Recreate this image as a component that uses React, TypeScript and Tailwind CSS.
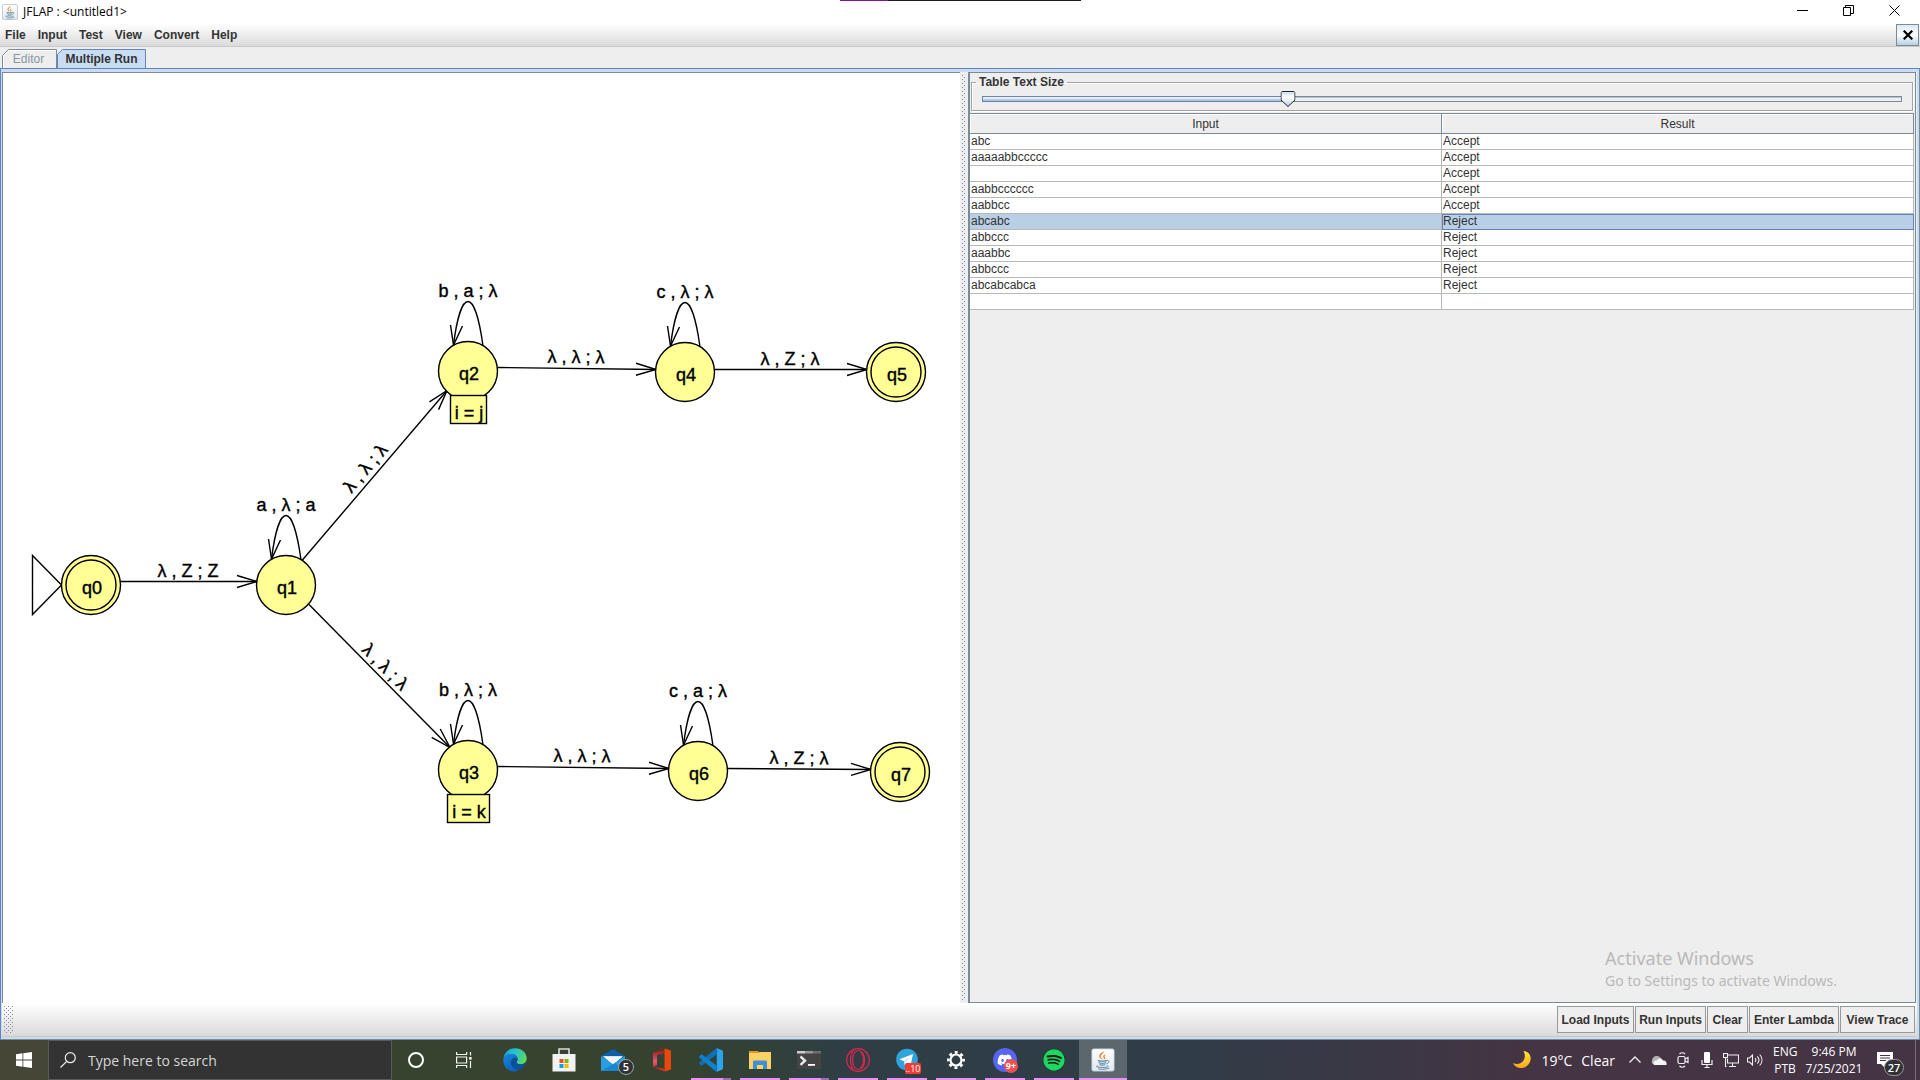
import React, { useState } from "react";
import { FaDiscord, FaSpotify } from "react-icons/fa";

const UI = "font-['Liberation_Sans',Arial,sans-serif]";
const SYS = "font-['Open_Sans','Noto_Sans',sans-serif]";

/* ---------- icons ---------- */

function JavaCup({ className }: { className: string }) {
  return (
    <svg viewBox="0 0 24 24" className={className} aria-hidden="true">
      <defs>
        <linearGradient id="cupbg" x1="0" y1="0" x2="0" y2="1">
          <stop offset="0" stopColor="#ffffff" />
          <stop offset="1" stopColor="#e3e8ee" />
        </linearGradient>
      </defs>
      <rect x="0.7" y="0.7" width="22.6" height="22.6" rx="2" fill="url(#cupbg)" stroke="#93a4b5" strokeWidth="0.8" />
      <path d="M12.500 2.800c1.300 2.200-3.600 3.600-2.900 6 .2.9 1.200 1.600 1.800 2.500-1.500-.7-3.600-1.800-3.100-3.900.5-2 4-2.700 4.200-4.600z" fill="#e76f00" />
      <path d="M14.800 6.200c-1.800.8-2.900 1.700-2.400 2.900.4.8 1.100 1.400.2 2.700 1.500-.8 1.700-1.700 1.100-2.700-.6-1 .1-1.900 1.100-2.900z" fill="#e76f00" />
      <g fill="none" stroke="#5382a1" strokeLinecap="round">
        <path d="M7.300 12.600c2.300.6 5.800.6 8 0" strokeWidth="1.200" />
        <path d="M8 14.700c1.900.6 4.900.6 6.700 0" strokeWidth="1.200" />
        <path d="M8.800 16.800c1.500.5 3.500.5 5 0" strokeWidth="1.200" />
        <path d="M16 12.600c2.300-.8 3.200 1.700-.2 3.200" strokeWidth="1" />
        <path d="M6.300 17.700c-2.500 1 0 1.700 5.400 1.700 4.500 0 6.800-.8 5-1.600" strokeWidth="1" />
        <path d="M7.500 21c3.500.5 8 .3 10.500-.8" strokeWidth="0.900" />
      </g>
    </svg>
  );
}

function EdgeIcon() {
  return (
    <svg viewBox="0 0 24 24" className="h-6 w-6" aria-hidden="true">
      <defs>
        <linearGradient id="edgeTop" x1="0" y1="0.300" x2="1" y2="0.600">
          <stop offset="0" stopColor="#1fa4e0" />
          <stop offset="0.500" stopColor="#2bc3c8" />
          <stop offset="1" stopColor="#5edb5a" />
        </linearGradient>
        <linearGradient id="edgeLow" x1="0" y1="0" x2="0.600" y2="1">
          <stop offset="0" stopColor="#1488dc" />
          <stop offset="1" stopColor="#0f60b8" />
        </linearGradient>
      </defs>
      <path d="M.4 10.500C1.300 4.500 6 .2 12 .2c6.800 0 11.700 4.700 11.700 10.200 0 3.400-2.600 5.800-6 5.800-2.700 0-4.200-1-4.200-2 0-.7 1.100-1.100 1.100-3.200 0-2.600-2.800-5-6.600-5C4.800 6 1.900 7.600.4 10.500z" fill="url(#edgeTop)" />
      <path d="M.3 11.800C.6 8 4 5.900 8 6c3.800 0 6.400 2 6.500 4.400-4-1.600-6.800 1.200-6.300 4.900.5 3.400 3.400 6.400 8 6.200-1.400 1.300-3 2-5 2.100C5.300 23.500.1 18.500.3 11.800z" fill="url(#edgeLow)" />
      <path d="M8.100 14.500c0-2.700 1.600-4.600 4.200-4.700 1.300 0 2.200.3 2.200 1.400 0 1.600-1 2.300-1 3 0 1.200 2 2.400 4.700 2.200 1.800-.1 3-.6 4-1.100.5-.2.700.2.500.6-1.500 3-4.300 5.600-7.600 5.700-3.700 0-7-3.300-7-7.100z" fill="#0c4f9f" />
    </svg>
  );
}

function StoreIcon() {
  return (
    <svg viewBox="0 0 24 24" className="h-6 w-6" aria-hidden="true">
      <path d="M7 7V1h10v6" fill="none" stroke="#dcdcdc" strokeWidth="1.600" />
      <path d="M.5 6h23v17.500H.5z" fill="#f2f2f2" />
      <path d="M7.500 11h4v4h-4z" fill="#f25022" />
      <path d="M12.500 11h4v4h-4z" fill="#7fba00" />
      <path d="M7.500 16h4v4h-4z" fill="#00a4ef" />
      <path d="M12.500 16h4v4h-4z" fill="#ffb900" />
    </svg>
  );
}

function MailIcon() {
  return (
    <span className="relative block h-6 w-6">
      <svg viewBox="0 0 24 24" className="h-6 w-6" aria-hidden="true">
        <path d="M0 8L12 1l12 7v4H0z" fill="#0f5ea8" />
        <path d="M2.500 8.500h19L12 17z" fill="#f5f5f5" />
        <path d="M0 8l12 8L24 8v15H0z" fill="#2a9fe0" />
        <path d="M2 8.200h20L12 16z" fill="#f5f5f5" />
        <path d="M0 23L14 15l10 8z" fill="#1b86d0" />
      </svg>
      <span className={`absolute -right-[9px] -bottom-[3px] flex h-4 w-4 items-center justify-center rounded-full border border-[#a5a5a5] bg-[#2f3338] text-[11px] font-semibold text-white ${SYS}`}>5</span>
    </span>
  );
}

function OfficeIcon() {
  return (
    <svg viewBox="0 0 24 24" className="h-6 w-6" aria-hidden="true">
      <defs>
        <linearGradient id="off" x1="0" y1="0" x2="0" y2="1">
          <stop offset="0" stopColor="#8f1210" />
          <stop offset="0.700" stopColor="#e05a78" />
          <stop offset="1" stopColor="#d8342c" />
        </linearGradient>
      </defs>
      <path d="M14.500.5L3 4.500V19l4-1.800V7l7.500-2z" fill="url(#off)" />
      <path d="M14.500.5L21 2.500v19l-6.500 2z" fill="#e8480c" />
      <path d="M3 19l11.500 1.500v3z" fill="#d42a20" />
    </svg>
  );
}

function VsCodeIcon() {
  return (
    <svg viewBox="0 0 24 24" className="h-6 w-6" aria-hidden="true">
      <path d="M17.500 0v6.500L3.300 17.200c-.4.300-.9.300-1.300 0L.4 15.700c-.5-.4-.5-1.100 0-1.500z" fill="#0e70b8" />
      <path d="M17.500 24v-6.500L3.300 6.800c-.4-.3-.9-.3-1.300 0L.4 8.300c-.5.400-.5 1.100 0 1.500z" fill="#1081cf" />
      <path d="M17.500 0L23 2.300c.6.300 1 .8 1 1.500v16.400c0 .7-.4 1.200-1 1.500L17.500 24c.3-.4.300-.8.300-1.200V1.200c0-.4 0-.8-.3-1.200z" fill="#2ba3f0" />
    </svg>
  );
}

function FolderIcon() {
  return (
    <svg viewBox="0 0 24 24" className="h-6 w-6" aria-hidden="true">
      <path d="M1 3h9l2 2.500H1z" fill="#e09a16" />
      <path d="M1 5h9l2-1h11v17H1z" fill="#fdd164" />
      <path d="M5 21v-7c0-.8.700-1.500 1.500-1.500h11c.8 0 1.500.7 1.500 1.500v7h-4v-4H9v4z" fill="#3c8fd8" />
    </svg>
  );
}

function TerminalIcon() {
  return (
    <svg viewBox="0 0 24 24" className="h-6 w-6" aria-hidden="true">
      <path d="M0 3h24v18H0z" fill="#444444" />
      <path d="M0 3h8v2.500H0z" fill="#cccccc" />
      <path d="M8 3h8v2.500H8z" fill="#979797" />
      <path d="M16 3h8v2.500h-8z" fill="#6d6d6d" />
      <path d="M3.500 8.500L8 12.700l-4.500 4.200" fill="none" stroke="#e8e8e8" strokeWidth="2.400" />
      <path d="M11 16h7v1.800h-7z" fill="#ffffff" />
    </svg>
  );
}

function OperaIcon() {
  return (
    <svg viewBox="0 0 24 24" className="h-6 w-6" fill="none" stroke="#e0264d" strokeWidth="1.200" aria-hidden="true">
      <circle cx="12" cy="12" r="11.300" />
      <ellipse cx="12" cy="12" rx="5.500" ry="9.500" />
      <path d="M7.500 2.200C3.500 7 3.500 17 7.500 21.800M14 3.500c6 1 6 16 0 17" />
    </svg>
  );
}

function TelegramIcon() {
  return (
    <span className="relative block h-6 w-6">
      <svg viewBox="0 0 24 24" className="h-6 w-6" aria-hidden="true">
        <circle cx="12" cy="11.500" r="10.800" fill="#2ea3dc" />
        <path d="M4.500 11.300L18 6l-2.500 12-4-3-2 2-.5-3.800z" fill="#ffffff" />
        <path d="M9 13.200L15.500 8.500 10.200 14l-.7 3z" fill="#b9d8ea" />
      </svg>
      <span className={`absolute -right-[2px] -bottom-[2px] flex h-[11px] w-4 items-center justify-center rounded-xs bg-[#f23c34] text-[9px] leading-[11px] text-white ${SYS}`}>..10</span>
    </span>
  );
}

function GearIcon() {
  return (
    <svg viewBox="0 0 24 24" className="h-6 w-6" fill="none" stroke="#ffffff" aria-hidden="true">
      <circle cx="12" cy="12" r="5.500" strokeWidth="2.200" />
      <circle cx="12" cy="12" r="7.600" strokeWidth="2.600" strokeDasharray="2.970 3" strokeDashoffset="1.500" />
    </svg>
  );
}

function DiscordIcon() {
  return (
    <span className="relative flex h-6 w-6 items-center justify-center rounded-full bg-[#5865f2]">
      <FaDiscord className="h-4 w-4 text-white" />
      <span className={`absolute -right-px -bottom-px flex h-[14px] w-[14px] items-center justify-center rounded-full bg-[#ed5050] text-[9px] font-bold text-white ${SYS}`}>9+</span>
    </span>
  );
}

function SpotifyIcon() {
  return (
    <span className="flex h-[22px] w-[22px] items-center justify-center rounded-full bg-[#0b1a10]">
      <FaSpotify className="h-[22px] w-[22px] text-[#1ed760]" />
    </span>
  );
}

function TaskViewIcon() {
  return (
    <svg viewBox="0 0 16 16" className="h-4 w-4" fill="none" stroke="#f2f2f2" strokeWidth="1.200" aria-hidden="true">
      <path d="M.6 0v2.500h10V0M.6 16v-2.500h10V16M.6 5h10v6H.6zM14.500 0v3.500M14.500 9v7" />
      <path d="M13.200 5h2.400v2.600h-2.400z" fill="#ffffff" stroke="none" />
    </svg>
  );
}

/* ---------- automaton ---------- */

type StateNode = { id: string; x: number; y: number; final?: boolean; note?: { text: string; w: number }; loop?: string };

const states: StateNode[] = [
  { id: "q0", x: 91, y: 585, final: true },
  { id: "q1", x: 286, y: 585, loop: "a , λ ; a" },
  { id: "q2", x: 468, y: 371, loop: "b , a ; λ", note: { text: "i = j", w: 36 } },
  { id: "q3", x: 468, y: 770, loop: "b , λ ; λ", note: { text: "i = k", w: 42 } },
  { id: "q4", x: 685, y: 372, loop: "c , λ ; λ" },
  { id: "q5", x: 896, y: 372, final: true },
  { id: "q6", x: 698, y: 771, loop: "c , a ; λ" },
  { id: "q7", x: 900, y: 772, final: true },
];

const edges = [
  { x1: 120, y1: 581, x2: 257, y2: 581, label: "λ , Z ; Z", lx: 188, ly: 577 },
  { x1: 302, y1: 560, x2: 447, y2: 390, label: "λ , λ ; λ", lx: 370, ly: 472 },
  { x1: 309, y1: 604, x2: 450, y2: 747, label: "λ , λ ; λ", lx: 381, ly: 671 },
  { x1: 498, y1: 367, x2: 656, y2: 369, label: "λ , λ ; λ", lx: 576, ly: 363 },
  { x1: 715, y1: 369, x2: 867, y2: 369, label: "λ , Z ; λ", lx: 790, ly: 365 },
  { x1: 498, y1: 766, x2: 669, y2: 768, label: "λ , λ ; λ", lx: 582, ly: 762 },
  { x1: 728, y1: 768, x2: 871, y2: 769, label: "λ , Z ; λ", lx: 799, ly: 764 },
];

function Automaton() {
  return (
    <svg
      viewBox="3 73 957 930"
      className={`block h-[930px] w-[957px] max-w-none shrink-0 text-[18px] ${UI}`}
      role="img"
      aria-label="Pushdown automaton"
    >
      <g fill="none" stroke="#000" strokeWidth="1.400">
        <path d="M32.500 555.500V614.500L61.500 585z" />
        {edges.map((e, i) => {
          const a = (Math.atan2(e.y2 - e.y1, e.x2 - e.x1) * 180) / Math.PI;
          return (
            <g key={i}>
              <line x1={e.x1} y1={e.y1 + 0.5} x2={e.x2} y2={e.y2 + 0.5} />
              <path d="M-20 -6L0 0L-20 6" transform={`translate(${e.x2} ${e.y2 + 0.5}) rotate(${a})`} />
              <text transform={`translate(${e.lx} ${e.ly}) rotate(${a})`} textAnchor="middle" fill="#000" strokeWidth="0.400">
                {e.label}
              </text>
            </g>
          );
        })}
      </g>
      {states.map((s) => (
        <g key={s.id} transform={`translate(${s.x} ${s.y})`} stroke="#000" strokeWidth="1.400">
          {s.loop && (
            <g fill="none">
              <path d="M15 -25C11 -54 5.500 -69.500 0 -69.500C-5.500 -69.500 -11 -54 -14.500 -26" />
              <path d="M-17.500 -46L-14.500 -26L-5.500 -45" />
              <text y="-74" textAnchor="middle" fill="#000" strokeWidth="0.400">{s.loop}</text>
            </g>
          )}
          <circle r="29.500" fill="#ffff96" />
          {s.final && <circle r="25" fill="none" />}
          <text x="1" y="9" textAnchor="middle" fill="#000" strokeWidth="0.400">{s.id}</text>
          {s.note && (
            <g>
              <rect x={-s.note.w / 2 + 0.5} y="24.500" width={s.note.w} height="28" fill="#ffff96" />
              <text x="1" y="48" textAnchor="middle" fill="#000" strokeWidth="0.400">{s.note.text}</text>
            </g>
          )}
        </g>
      ))}
    </svg>
  );
}

/* ---------- right pane ---------- */

function SizeSlider() {
  const [value, setValue] = useState(333);
  const pct = `${value / 10}%`;
  return (
    <fieldset className="mr-[2px] ml-px h-9 min-w-0 border border-[#a3a3a3] px-[10px] shadow-[inset_1px_1px_0_#fff,1px_1px_0_#fff]">
      <legend className="-ml-[6px] px-[3px] text-[12px] leading-[14px] font-bold text-[#333]">
        <label htmlFor="text-size">Table Text Size</label>
      </legend>
      <div className="relative mt-1 h-4">
        <div className="absolute inset-x-0 top-[3px] h-[6px] border border-[#7a8a99] bg-[#eeeeee] shadow-[inset_0_1px_0_#b8c4d0]" />
        <div className="absolute left-0 top-[3px] h-[6px] border border-[#6382bf] bg-linear-to-b from-white to-[#a3b8cc]" style={{ width: pct }} />
        <svg viewBox="0 0 15 17" className="absolute -top-[2px] h-[17px] w-[15px] -translate-x-1/2" style={{ left: pct }} aria-hidden="true">
          <defs>
            <linearGradient id="thumb" x1="0" y1="0" x2="0" y2="1">
              <stop offset="0" stopColor="#c8ddf2" />
              <stop offset="0.400" stopColor="#ffffff" />
              <stop offset="1" stopColor="#b8cfe5" />
            </linearGradient>
          </defs>
          <path d="M1.500.5h12l1 1v7.500L7.500 15.500.5 9V1.500z" fill="url(#thumb)" stroke="#222" />
        </svg>
        <input
          id="text-size"
          type="range"
          min={0}
          max={1000}
          value={value}
          onChange={(e) => setValue(Number(e.target.value))}
          className="absolute inset-0 h-full w-full cursor-pointer opacity-0"
        />
      </div>
    </fieldset>
  );
}

const rows: [string, string][] = [
  ["abc", "Accept"],
  ["aaaaabbccccc", "Accept"],
  ["", "Accept"],
  ["aabbcccccc", "Accept"],
  ["aabbcc", "Accept"],
  ["abcabc", "Reject"],
  ["abbccc", "Reject"],
  ["aaabbc", "Reject"],
  ["abbccc", "Reject"],
  ["abcabcabca", "Reject"],
  ["", ""],
];

function ResultTable() {
  return (
    <table className="w-full table-fixed border-separate border-spacing-0 text-[12px] leading-[15px] text-[#333]">
      <thead>
        <tr className="h-5">
          <th className="border-r border-b border-[#7a8a99] pt-px font-normal shadow-[inset_1px_1px_0_#fff]">Input</th>
          <th className="border-r border-b border-[#7a8a99] pt-px font-normal shadow-[inset_1px_1px_0_#fff]">Result</th>
        </tr>
      </thead>
      <tbody>
        {rows.map(([input, result], i) => {
          const selected = i === 5;
          return (
            <tr key={i} className={selected ? "h-4 bg-[#b8cfe5]" : "h-4 bg-white"}>
              <td className="h-4 border-r border-b border-[#b8b8b8] px-px py-0">{input}</td>
              <td className={selected ? "h-4 border-r border-b border-[#b8b8b8] px-px py-0 outline outline-1 -outline-offset-1 outline-[#6382bf]" : "h-4 border-r border-b border-[#b8b8b8] px-px py-0"}>{result}</td>
            </tr>
          );
        })}
      </tbody>
    </table>
  );
}

const DOTS =
  "bg-[conic-gradient(at_1px_1px,transparent_75%,#7a8a99_0),conic-gradient(at_1px_1px,transparent_75%,#7a8a99_0)] bg-[size:4px_4px] [background-position:0_0,2px_2px]";

/* ---------- chrome ---------- */

const menus = ["File", "Input", "Test", "View", "Convert", "Help"];
const actions = [
  { label: "Load Inputs", width: "w-[77px]" },
  { label: "Run Inputs", width: "w-[71px]" },
  { label: "Clear", width: "w-[41px]" },
  { label: "Enter Lambda", width: "w-[90px]" },
  { label: "View Trace", width: "w-[75px]" },
];

function TitleBar() {
  return (
    <header className="relative flex h-6 items-center bg-white">
      <div className="absolute top-0 left-[840px] flex h-px w-[241px] bg-[#1c1c1c]">
        <div className="h-px w-12 bg-[#7d1494]" />
      </div>
      <JavaCup className="ml-[2px] h-4 w-4" />
      <h1 className={`ml-[5px] text-[12px] text-black ${SYS}`}>JFLAP : &lt;untitled1&gt;</h1>
      <div className="mr-[20px] ml-auto flex h-full items-center gap-[35px] pb-[3px]">
        <button type="button" aria-label="Minimize">
          <svg viewBox="0 0 11 11" className="h-[11px] w-[11px]"><path d="M0 5.500h11" stroke="#000" /></svg>
        </button>
        <button type="button" aria-label="Restore">
          <svg viewBox="0 0 11 11" className="h-[11px] w-[11px]" fill="none" stroke="#000"><path d="M.5 2.500h7v8h-7zM2.500 2.500v-2h8v8h-3" /></svg>
        </button>
        <button type="button" aria-label="Close">
          <svg viewBox="0 0 11 11" className="h-[11px] w-[11px]" stroke="#000"><path d="M.5.500l10 10M10.500.500l-10 10" /></svg>
        </button>
      </div>
    </header>
  );
}

function MenuBar() {
  return (
    <nav className="flex h-[23px] items-center border-b border-[#c8c8c8] bg-linear-to-b from-white to-[#dadada] pl-[5px]">
      <div className="flex gap-3">
        {menus.map((m) => (
          <button key={m} type="button" className="text-[12px] leading-[16px] font-bold text-[#333]">{m}</button>
        ))}
      </div>
      <button type="button" aria-label="Close tab" className="mr-px ml-auto flex h-[22px] w-[23px] items-center justify-center border border-[#7a8a99] bg-linear-to-b from-[#dde8f3] via-white to-[#b8cfe5]">
        <svg viewBox="0 0 10 10" className="h-[10px] w-[10px]" stroke="#000" strokeWidth="2.200"><path d="M.7.700l8.600 8.600M9.300.700L.7 9.300" /></svg>
      </button>
    </nav>
  );
}

function Tabs() {
  return (
    <div role="tablist" className="flex h-[21px] items-end bg-[#eeeeee] pl-[2px]">
      <button type="button" role="tab" aria-selected="false" className="relative h-[19px] w-[55px] pr-[2px] text-[12px] leading-[16px] text-[#8796a5]">
        <svg viewBox="0 0 55 19" className="absolute inset-0 h-full w-full" fill="none" aria-hidden="true">
          <path d="M.5 19V6.500L6.500.5H54.500V19" stroke="#7a8a99" />
          <path d="M1.500 19V7L7 1.500H54" stroke="#fff" />
        </svg>
        <span className="relative">Editor</span>
      </button>
      <button type="button" role="tab" aria-selected="true" className="relative h-[19px] w-[89px] text-[12px] leading-[18px] font-bold text-[#333]">
        <svg viewBox="0 0 89 19" className="absolute inset-0 h-full w-full" aria-hidden="true">
          <path d="M.5 20V5.500L5.500.5H88.500V20" fill="#c8ddf2" stroke="#6382bf" />
        </svg>
        <span className="relative">Multiple Run</span>
      </button>
    </div>
  );
}

const pinned = [
  { name: "Microsoft Edge", icon: <EdgeIcon />, open: false },
  { name: "Microsoft Store", icon: <StoreIcon />, open: false },
  { name: "Mail", icon: <MailIcon />, open: false },
  { name: "Office", icon: <OfficeIcon />, open: false },
  { name: "Visual Studio Code", icon: <VsCodeIcon />, open: true, stacked: true },
  { name: "File Explorer", icon: <FolderIcon />, open: true },
  { name: "Terminal", icon: <TerminalIcon />, open: true, stacked: true },
  { name: "Opera", icon: <OperaIcon />, open: true },
  { name: "Telegram", icon: <TelegramIcon />, open: true },
  { name: "Settings", icon: <GearIcon />, open: true },
  { name: "Discord", icon: <DiscordIcon />, open: true },
  { name: "Spotify", icon: <SpotifyIcon />, open: true },
  { name: "JFLAP", icon: <JavaCup className="h-6 w-6" />, open: true, active: true },
];

function Taskbar() {
  return (
    <footer className={`flex h-10 items-stretch bg-[linear-gradient(to_right,#464637_0%,#36442f_20%,#34422f_36%,#2f3e45_44%,#303c47_62%,#453443_80%)] text-white ${SYS}`}>
      <button type="button" aria-label="Start" className="flex w-12 items-center justify-center">
        <svg viewBox="0 0 16 16" className="h-4 w-4" fill="#fff"><path d="M0 2.200l6.500-.9v6.200H0zM7.300 1.200L16 0v7.500H7.300zM0 8.400h6.500v6.300L0 13.800zM7.300 8.400H16V16l-8.700-1.200z" /></svg>
      </button>
      <label className="flex w-[344px] items-center gap-3 border border-[#5a5a5a] bg-[#333333] pl-[11px]">
        <svg viewBox="0 0 16 16" className="h-4 w-4 shrink-0" fill="none" stroke="#f0f0f0" strokeWidth="1.200" aria-hidden="true">
          <circle cx="10.300" cy="5.700" r="5" /><path d="M6.700 9.300L.5 15.500" />
        </svg>
        <input type="text" aria-label="Search" placeholder="Type here to search" className="w-full bg-transparent text-[14px] text-white outline-none placeholder:text-[#d6d6d6]" />
      </label>
      <button type="button" aria-label="Cortana" className="flex w-12 items-center justify-center">
        <span className="block h-4 w-4 rounded-full border-2 border-white" />
      </button>
      <button type="button" aria-label="Task view" className="flex w-12 items-center justify-center"><TaskViewIcon /></button>
      <div className="ml-[3px] flex gap-px">
        {pinned.map((p) => (
          <button key={p.name} type="button" aria-label={p.name} className={p.active ? "relative flex w-12 items-center justify-center bg-[#5b666d]" : "relative flex w-12 items-center justify-center"}>
            {p.icon}
            {p.open && (
              <span className={p.active ? "absolute inset-x-0 bottom-0 h-[2px] bg-[#ee8ff8]" : "absolute inset-x-1 bottom-0 flex h-[2px] justify-end bg-[#ee8ff8]"}>
                {p.stacked && <span className="w-2 bg-[#a46bb0]" />}
              </span>
            )}
          </button>
        ))}
      </div>
      <div className="ml-auto flex items-center text-[12px] leading-[17px]">
        <button type="button" className="mr-3 flex items-center gap-[9px] text-[14px]">
          <svg viewBox="0 0 20 20" className="h-5 w-5" aria-hidden="true">
            <defs>
              <linearGradient id="moon" x1="0" y1="0" x2="0" y2="1"><stop offset="0" stopColor="#ffe53b" /><stop offset="1" stopColor="#f9a71c" /></linearGradient>
            </defs>
            <path d="M11.500 1c5 .5 8 4.500 7 9.300-1 5-5.500 8.200-10.500 7.700-3.500-.4-6-2.300-7-5 4 2 8.500.800 10.800-3C13.400 7.300 13 3.600 11.500 1z" fill="url(#moon)" />
          </svg>
          <span>19°C</span>
          <span>Clear</span>
        </button>
        <div className="flex items-center gap-2">
          <svg viewBox="0 0 16 16" className="h-4 w-4" fill="none" stroke="#f0f0f0" strokeWidth="1.300" aria-hidden="true"><path d="M2.500 10.500L8 5l5.500 5.500" /></svg>
          <svg viewBox="0 0 16 16" className="h-4 w-4" aria-hidden="true">
            <path d="M1 9c0-3 2-5 5-5 2 0 3 1 4 2.500L6 12H3C1.500 12 0 11 1 9z" fill="#b5b0b5" />
            <path d="M3 13c-1.500-2.500 0-4.500 2.500-4.500C7 6 11 5.500 12 8.500c3 0 4 2 3.500 4.500z" fill="#f5f5f5" />
          </svg>
          <svg viewBox="0 0 16 16" className="h-4 w-4" fill="none" stroke="#f0f0f0" strokeWidth="1.200" aria-hidden="true">
            <rect x="3" y="4.500" width="7" height="7" rx="1.500" /><path d="M10 7l3-1.500v5L10 9M4.500 2c1.500-1.500 4-1.500 5.500 0M4.500 14c1.500 1.500 4 1.500 5.500 0" />
          </svg>
          <svg viewBox="0 0 16 16" className="h-4 w-4" aria-hidden="true">
            <rect x="5" y="0" width="6" height="11" rx="1" fill="#fff" /><path d="M3 8v4.500h10V8M8 12.500V16M5.500 15.500h5" fill="none" stroke="#f0f0f0" strokeWidth="1.200" />
          </svg>
          <svg viewBox="0 0 16 16" className="h-4 w-4" fill="none" stroke="#f0f0f0" strokeWidth="1.100" aria-hidden="true">
            <path d="M5 3h10.500v8H4.500V6.500M9.500 11v3M6 14.500h7M.5 1.500h4v4h-4zM2.500 5.500v9h1" />
          </svg>
          <svg viewBox="0 0 16 16" className="h-4 w-4" fill="none" stroke="#f0f0f0" strokeWidth="1.100" aria-hidden="true">
            <path d="M.5 6h2l3-3v10l-3-3h-2zM8 6c1 1.200 1 2.800 0 4M10.300 4.300c2 2.200 2 5.200 0 7.400M12.700 2.500c3 3.300 3 7.700 0 11" />
          </svg>
        </div>
        <div className="ml-[10px] w-6 text-center">ENG<br />PTB</div>
        <div className="ml-[5px] w-16 text-center">9:46 PM<br />7/25/2021</div>
        <button type="button" aria-label="Notifications" className="relative ml-[10px] h-8 w-7">
          <svg viewBox="0 0 16 16" className="ml-[1px] h-4 w-4" aria-hidden="true">
            <path d="M0 0h16v12H8v4l-4-4H0z" fill="#fff" /><path d="M3 3.500h10M3 6h10M3 8.500h6" stroke="#453443" />
          </svg>
          <span className="absolute right-0 bottom-0 flex h-[17px] w-5 items-center justify-center rounded-full border border-[#9a9a9a] bg-[#303236] text-[11px] font-semibold">27</span>
        </button>
        <div className="mr-1 ml-[11px] h-10 w-px bg-[#7d727c]" />
      </div>
    </footer>
  );
}

export default function App() {
  return (
    <div className={`flex min-h-screen flex-col bg-[#eeeeee] ${UI}`}>
      <TitleBar />
      <MenuBar />
      <Tabs />
      <main className="flex flex-1 flex-col border-t border-r border-b border-l border-t-[#6382bf] border-r-[#7a8a99] border-b-[#7a8a99] border-l-[#6382bf] bg-[#c8ddf2] pt-[3px] pr-[2px] pb-[2px] pl-px">
        <div className="grid flex-1 grid-cols-[958fr_8fr_949fr] bg-[#eeeeee]">
          <section className="flex overflow-hidden border-t border-l border-[#7a8a99] bg-white">
            <Automaton />
          </section>
          <div className="flex justify-center py-[3px]">
            <div className={`w-1 ${DOTS}`} />
          </div>
          <section className="relative mr-px flex flex-col border border-l-2 border-[#7a8a99]">
            <div className="pt-[2px]">
              <SizeSlider />
            </div>
            <div className="mt-[2px] mr-px border-t border-[#7a8a99]">
              <ResultTable />
            </div>
            <div className="pointer-events-none absolute right-[78px] bottom-[11px] font-['Noto_Sans','Open_Sans',sans-serif] text-[#b9b9b9]">
              <div className="text-[18px] leading-[26px]">Activate Windows</div>
              <div className="text-[14px] leading-[20px]">Go to Settings to activate Windows.</div>
            </div>
          </section>
        </div>
        <div className="flex h-[34px] items-center border-b border-[#c8c8c8] bg-linear-to-b from-white to-[#dadada] pl-[2px]">
          <div className={`h-7 w-[10px] ${DOTS}`} />
          <div className="mr-[2px] ml-auto flex gap-px">
            {actions.map((a) => (
              <button key={a.label} type="button" className={`h-[27px] border border-[#999999] bg-[#eeeeee] text-[12px] font-bold whitespace-nowrap text-[#333] ${a.width}`}>{a.label}</button>
            ))}
          </div>
        </div>
      </main>
      <Taskbar />
    </div>
  );
}
